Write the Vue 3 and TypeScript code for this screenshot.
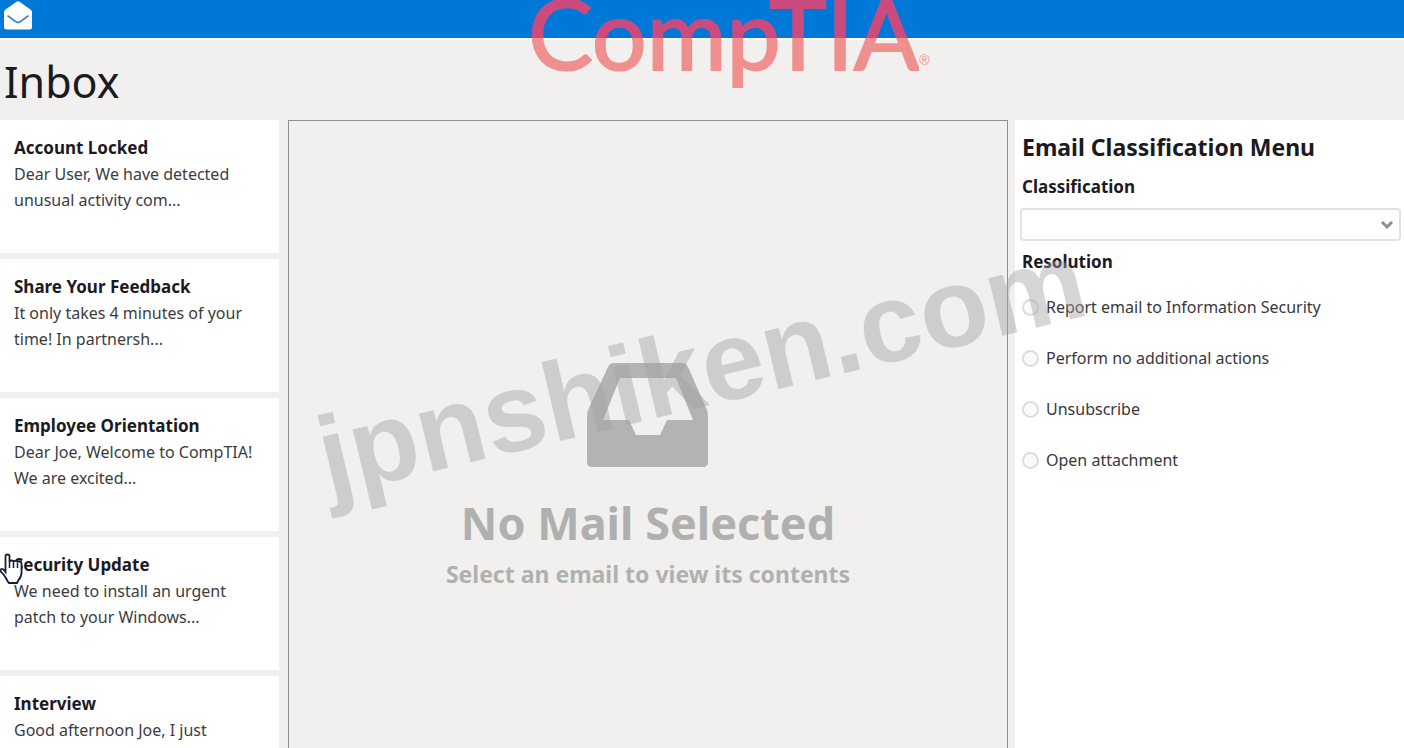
<script setup lang="ts">
import { ref } from 'vue'

interface Mail {
  subject: string
  preview: string[]
}

const mails: Mail[] = [
  { subject: 'Account Locked', preview: ['Dear User, We have detected', 'unusual activity com...'] },
  { subject: 'Share Your Feedback', preview: ['It only takes 4 minutes of your', 'time! In partnersh...'] },
  { subject: 'Employee Orientation', preview: ['Dear Joe, Welcome to CompTIA!', 'We are excited...'] },
  { subject: 'Security Update', preview: ['We need to install an urgent', 'patch to your Windows...'] },
  { subject: 'Interview', preview: ['Good afternoon Joe, I just'] },
]

const resolutions: string[] = [
  'Report email to Information Security',
  'Perform no additional actions',
  'Unsubscribe',
  'Open attachment',
]

const classification = ref('')
const resolution = ref('')
</script>

<template>
  <div class="page">
    <header class="topbar">
      <svg class="mail-icon" viewBox="0 0 30 30" aria-hidden="true">
        <path d="M1 11.500 Q1 10 2.200 9.200 L13.500 1.200 Q15 0.200 16.500 1.200 L27.800 9.200 Q29 10 29 11.500 V26.500 Q29 29 26.500 29 H3.500 Q1 29 1 26.500 Z" fill="#fff" />
        <path d="M5 15.500 L12.500 21 Q15 22.800 17.500 21 L25 15.500" fill="none" stroke="#3b86cf" stroke-width="1.600" stroke-linecap="round" />
      </svg>
    </header>
    <h1 class="heading">Inbox</h1>

    <div class="columns">
      <nav class="mails" aria-label="Inbox">
        <button v-for="m in mails" :key="m.subject" type="button" class="mail">
          <strong class="subject">{{ m.subject }}</strong>
          <span v-for="line in m.preview" :key="line" class="preview">{{ line }}</span>
        </button>
      </nav>

      <main class="reader">
        <svg class="tray" viewBox="0 0 122 104" aria-hidden="true">
          <path fill-rule="evenodd" fill="#b3b3b3" d="M27 0 H95 Q99 0 101 4 L120 47 Q121 50 121 54 V99 Q121 104 116 104 H5 Q0 104 0 99 V54 Q0 50 1.500 46 L21 4 Q23 0 27 0 Z M33 15 L16 57 H42 L49 72 H73 L80 57 H106 L89 15 Z" />
        </svg>
        <h2 class="empty-title">No Mail Selected</h2>
        <p class="empty-text">Select an email to view its contents</p>
      </main>

      <aside class="menu">
        <h2 class="menu-title">Email Classification Menu</h2>
        <label class="label" for="classification">Classification</label>
        <div class="select-box">
          <select id="classification" v-model="classification">
            <option value=""></option>
          </select>
          <svg class="chevron" viewBox="0 0 14 10" aria-hidden="true">
            <path d="M2 2 L7 7 L12 2" fill="none" stroke="#8c8c8c" stroke-width="3" />
          </svg>
        </div>
        <fieldset class="resolution">
          <legend class="label">Resolution</legend>
          <label v-for="r in resolutions" :key="r" class="option">
            <input v-model="resolution" type="radio" name="resolution" :value="r" />
            <span>{{ r }}</span>
          </label>
        </fieldset>
      </aside>
    </div>

    <div class="brand"><span class="wordmark">CompTIA</span><span class="reg">®</span></div>
    <div class="watermark">jpnshiken.com</div>
    <svg class="cursor" viewBox="0 0 24 32" aria-hidden="true">
      <path d="M5.500 19 V3.500 Q5.500 1.500 7.500 1.500 Q9.500 1.500 9.500 3.500 V9 Q9.500 7.500 11.500 7.500 Q13.500 7.500 13.500 9 Q13.500 7.800 15.500 7.800 Q17.500 7.800 17.500 9.500 Q17.500 8.500 19.500 8.500 Q21.500 8.500 21.500 11 V20 Q21.500 24 18.500 27 L17 30 H9 L7.500 28 Q6 25 4 22 L0.800 18.500 Q0 16.500 1.500 16 Q3 15.500 5.500 19 Z" fill="#fff" stroke="#16202c" stroke-width="1.800" />
      <path d="M9.500 9 V15 M13.500 9 V15 M17.500 10 V15" stroke="#16202c" stroke-width="1.500" />
    </svg>
  </div>
</template>

<style>
body {
  margin: 0;
}
</style>

<style scoped>
.page {
  position: relative;
  display: flex;
  flex-direction: column;
  height: 100vh;
  overflow: hidden;
  background: #f1f0ee;
  color: #1b1b1f;
  font-family: "Noto Sans", sans-serif;
  font-size: 16px;
  line-height: 26px;
}
.topbar {
  flex: none;
  height: 38px;
  padding-left: 3px;
  background: #0078d7;
  border-bottom: 2px solid #fafafa;
}
.mail-icon {
  display: block;
  width: 30px;
  height: 31px;
}
.heading {
  flex: none;
  height: 80px;
  margin: 0;
  padding-left: 4px;
  box-sizing: border-box;
  font-size: 43px;
  font-weight: 400;
  line-height: 84px;
}
.columns {
  flex: 1;
  min-height: 0;
  display: grid;
  grid-template-columns: 279px 1fr 389px;
  column-gap: 7px;
}
.mails {
  display: flex;
  flex-direction: column;
  gap: 6px;
}
.mail {
  flex: none;
  display: flex;
  flex-direction: column;
  height: 133px;
  padding: 15px 14px;
  border: 0;
  background: #fff;
  color: #3c3c40;
  font: inherit;
  text-align: left;
  white-space: nowrap;
}
.subject {
  color: #1b1b1f;
  font-size: 17px;
}
.reader {
  display: flex;
  flex-direction: column;
  align-items: center;
  margin-left: 2px;
  padding-top: 242px;
  border: 1px solid #8f8f8f;
  border-bottom: 0;
  color: #b0b0b0;
}
.tray {
  flex: none;
  width: 122px;
  height: 104px;
}
.empty-title {
  margin: 24px 0 0;
  font-size: 45px;
  line-height: 64px;
}
.empty-text {
  margin: 4px 0 0;
  font-size: 23px;
  font-weight: 700;
  line-height: 30px;
}
.menu {
  padding: 12px 3px 0 5px;
  background: #fff;
}
.menu-title {
  margin: 0 2px 12px;
  font-size: 23px;
  line-height: 30px;
}
.label {
  display: block;
  padding: 0 2px;
  font-size: 17px;
  font-weight: 700;
}
.select-box {
  position: relative;
  margin: 8px 0;
}
select {
  display: block;
  width: 100%;
  height: 33px;
  border: 2px solid #e2e2e2;
  border-radius: 4px;
  background: #fff;
  appearance: none;
}
.chevron {
  position: absolute;
  top: 12px;
  right: 7px;
  width: 14px;
  height: 10px;
  pointer-events: none;
}
.resolution {
  margin: 0;
  padding: 19px 0 0;
  border: 0;
}
.option {
  display: flex;
  align-items: center;
  gap: 7px;
  margin-bottom: 25px;
  padding-left: 2px;
  color: #38383c;
}
.option input {
  width: 17px;
  height: 17px;
  margin: 0;
  border: 2px solid #dcdcdc;
  border-radius: 50%;
  background: #fafafa;
  appearance: none;
}
.option input:checked {
  background: #0078d7;
}
.brand {
  position: absolute;
  top: 0;
  left: calc(50% - 174px);
  display: flex;
  pointer-events: none;
}
.wordmark {
  height: 92px;
  background: linear-gradient(#cc4b7e 38px, #ef908e 38px);
  background-clip: text;
  color: transparent;
  font-family: Lato, sans-serif;
  font-size: 97px;
  -webkit-text-stroke: 2px transparent;
  line-height: 66px;
}
.reg {
  padding-top: 52px;
  color: #ef908e;
  font-family: "Liberation Sans", sans-serif;
  font-size: 14px;
  line-height: 16px;
}
.watermark {
  position: absolute;
  top: 402px;
  left: calc(50% - 373px);
  color: rgba(160, 160, 160, 0.43);
  font-family: "Liberation Sans", sans-serif;
  font-size: 112px;
  font-weight: 700;
  line-height: 112px;
  white-space: nowrap;
  transform: rotate(-13.4deg);
  transform-origin: 0 95px;
  pointer-events: none;
}
.cursor {
  position: absolute;
  top: 553px;
  left: 0;
  width: 24px;
  height: 32px;
  pointer-events: none;
}
</style>
